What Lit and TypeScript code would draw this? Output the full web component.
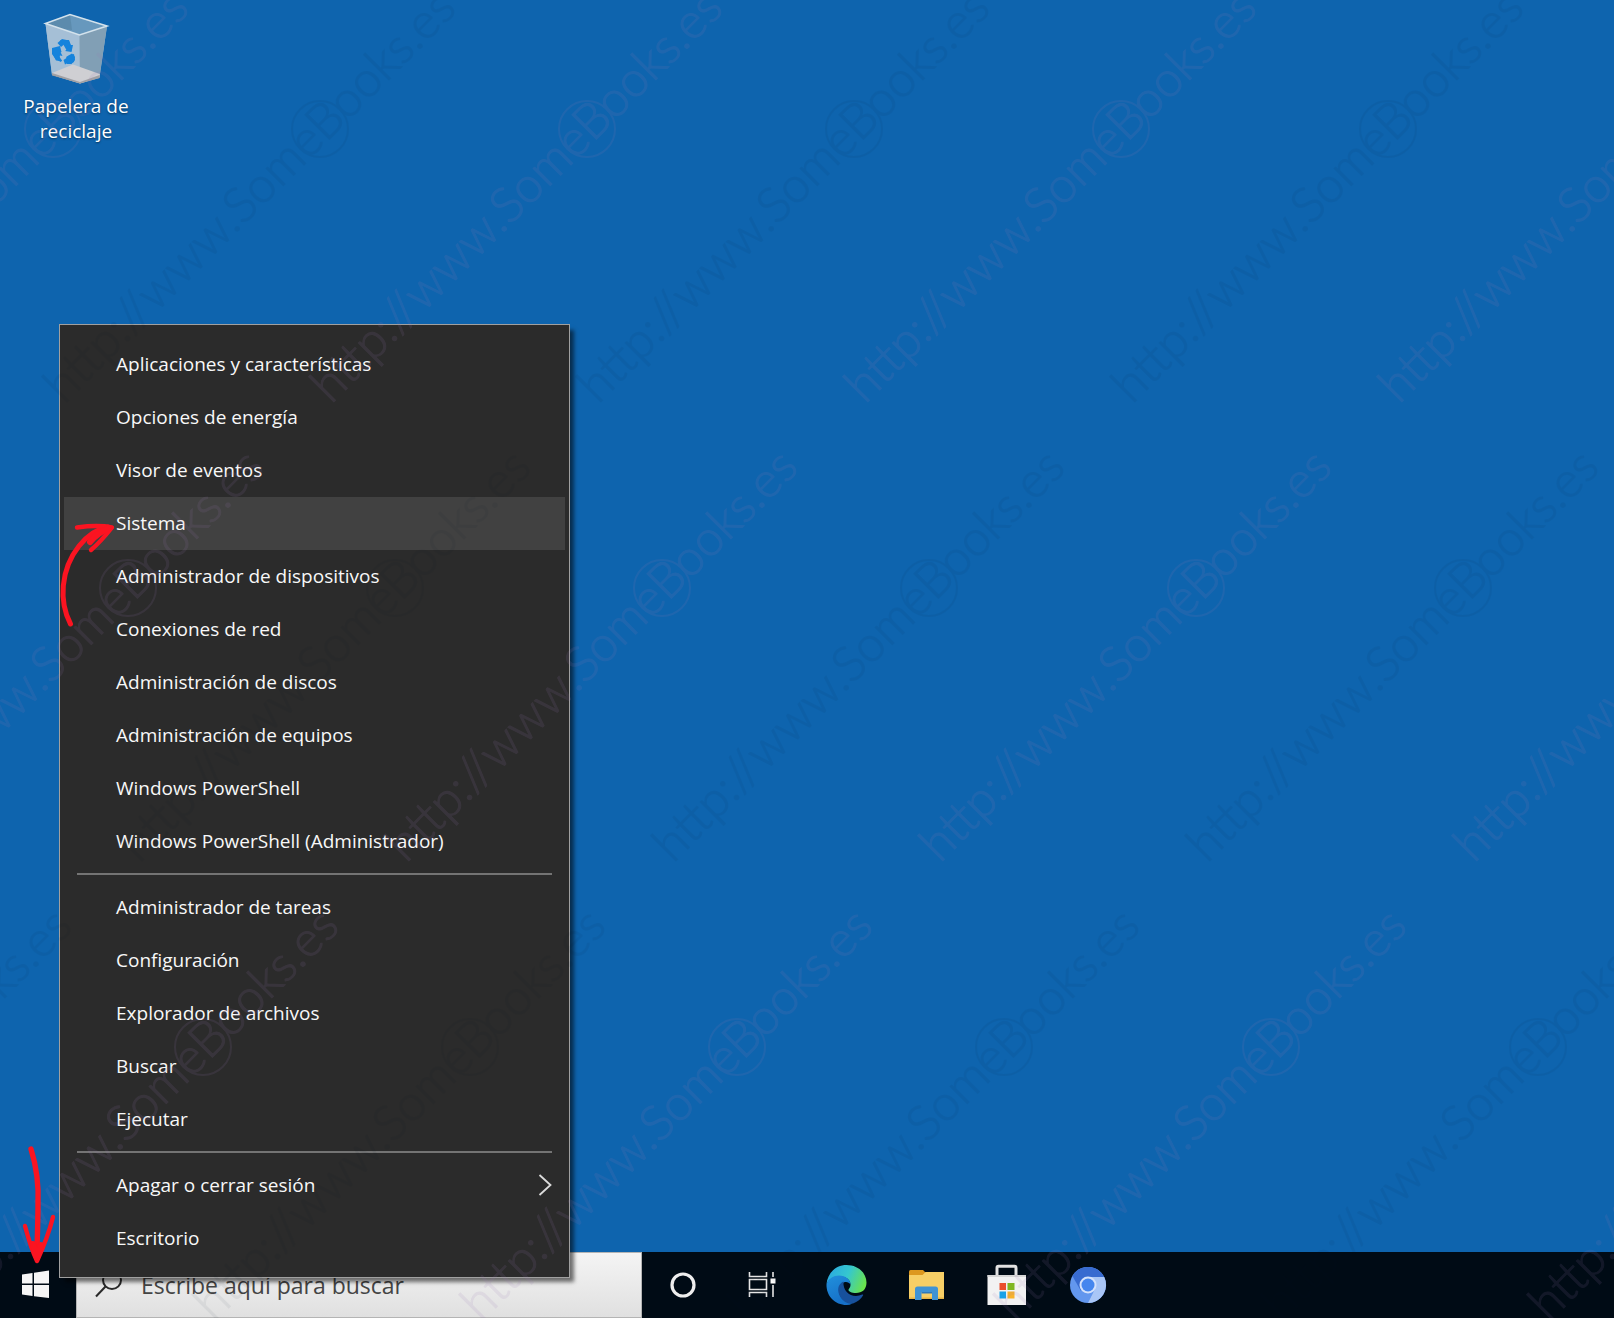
import { LitElement, html, svg, css, nothing } from "lit";
import { customElement, state } from "lit/decorators.js";

const MENU: string[][] = [
  [
    "Aplicaciones y características",
    "Opciones de energía",
    "Visor de eventos",
    "Sistema",
    "Administrador de dispositivos",
    "Conexiones de red",
    "Administración de discos",
    "Administración de equipos",
    "Windows PowerShell",
    "Windows PowerShell (Administrador)",
  ],
  ["Administrador de tareas", "Configuración", "Explorador de archivos", "Buscar", "Ejecutar"],
  ["Apagar o cerrar sesión", "Escritorio"],
];

const SUBMENU = "Apagar o cerrar sesión";

/* Centres of the repeated site mark: rows step 75 right and 459 down. */
const MARKS = [0, 1, 2]
  .flatMap((row) =>
    [-1, 0, 1, 2, 3, 4, 5, 6].map((col) => ({
      x: 53 + row * 75 + col * 267,
      y: 129 + row * 459,
      dark: Math.abs(col % 2) === 1,
    })),
  )
  .filter((mark) => mark.x > -130);

@customElement("win-menu")
export class WinMenu extends LitElement {
  @state() private active = "Sistema";

  static styles = css`
    :host {
      display: block;
      box-sizing: border-box;
      padding: 13px 4px 12px;
      color: #f8f8f8;
      background: #2b2b2b;
      border: 1px solid #a0a0a0;
      box-shadow: 5px 5px 4px -1px rgba(0, 0, 0, 0.55);
    }
    ul {
      margin: 0;
      padding: 0;
      list-style: none;
    }
    .item {
      display: flex;
      align-items: center;
      justify-content: space-between;
      width: 100%;
      height: 53px;
      padding: 0 12px 2px 52px;
      border: 0;
      background: none;
      color: inherit;
      font: inherit;
      text-align: left;
    }
    .active {
      background: #414141;
    }
    .rule {
      height: 2px;
      margin: 5px 13px 6px;
      background: #747474;
    }
  `;

  render() {
    return html`<ul role="menu">
      ${MENU.map(
        (group, i) => html`
          ${i ? html`<li class="rule" role="separator"></li>` : nothing}
          ${group.map(
            (label) => html`<li role="none">
              <button
                class="item ${label === this.active ? "active" : ""}"
                role="menuitem"
                @mouseenter=${() => (this.active = label)}
              >
                ${label}
                ${label === SUBMENU
                  ? html`<svg width="15" height="24" viewBox="0 0 15 24" fill="none">
                      <path d="M1.500 2 12.500 12 1.500 22" stroke="#dcdcdc" stroke-width="1.800" />
                    </svg>`
                  : nothing}
              </button>
            </li>`,
          )}
        `,
      )}
    </ul>`;
  }
}

@customElement("task-bar")
export class TaskBar extends LitElement {
  static styles = css`
    :host {
      display: flex;
      height: 66px;
      background: #000b15;
    }
    button {
      display: flex;
      align-items: center;
      justify-content: center;
      width: 81px;
      padding: 0;
      border: 0;
      background: none;
    }
    .start {
      width: 76px;
    }
    .search {
      display: flex;
      align-items: center;
      box-sizing: border-box;
      width: 566px;
      padding-left: 18px;
      gap: 18px;
      border: 1px solid #b4b4b4;
      background: linear-gradient(#f4f4f4, #e0e0e0);
    }
    input {
      flex: 1;
      min-width: 0;
      padding: 0;
      border: 0;
      outline: 0;
      background: none;
      font: inherit;
      font-size: 23px;
      color: #333;
    }
    input::placeholder {
      color: #444;
      opacity: 1;
    }
  `;

  render() {
    return html`
      <button class="start" aria-label="Inicio">
        <svg width="76" height="66" viewBox="0 0 76 66" fill="#f6f6f6">
          <path d="M22 22.500 32.500 21V31.500H22zM34 20.700 49 18.500V31.500H34zM22 33H32.500V44L22 42.500zM34 33H49V46L34 44.200z" />
        </svg>
      </button>
      <label class="search">
        <svg width="28" height="30" viewBox="0 0 28 30" fill="none" stroke="#2a2a2a" stroke-width="2">
          <circle cx="17" cy="10" r="9" />
          <path d="M10.500 16.500 1 26.500" />
        </svg>
        <input type="search" placeholder="Escribe aquí para buscar" aria-label="Buscar" />
      </label>
      <button aria-label="Cortana">
        <svg width="40" height="40" viewBox="0 0 40 40">
          <circle cx="20" cy="20" r="11" fill="none" stroke="#eee" stroke-width="3.200" />
        </svg>
      </button>
      <button aria-label="Vista de tareas">
        <svg width="40" height="40" viewBox="0 0 40 40" fill="none" stroke="#e6e6e6" stroke-width="1.600">
          <path d="M5.500 7V11.500H22.500V7M5.500 32V27.500H22.500V32M5.500 14.500H22.500V24.500H5.500zM29 7V12M29 20V32" />
          <path d="M26.500 13.500H31.500V18.500H26.500z" fill="#fff" stroke="none" />
        </svg>
      </button>
      <button aria-label="Microsoft Edge">
        <svg width="44" height="44" viewBox="0 0 44 44">
          <defs>
            <linearGradient id="top" x1="0" y1="0.300" x2="1" y2="0.600">
              <stop offset="0" stop-color="#2aa9e0" />
              <stop offset="0.500" stop-color="#35c7cf" />
              <stop offset="1" stop-color="#6be34a" />
            </linearGradient>
            <linearGradient id="left" x1="0" y1="0" x2="0.400" y2="1">
              <stop offset="0" stop-color="#2190dc" />
              <stop offset="1" stop-color="#1670c8" />
            </linearGradient>
          </defs>
          <path d="M3.500 21C4.500 10 13 2 23.500 2 35 2 43.500 10 43.500 19.500 43.500 26.500 39 30 33 30 28.500 30 25.500 28.500 25.500 27 25.500 25.800 27.500 25 27.500 21.500 27.500 17 23 13.500 17 13.500 10 13.500 5 17 3.500 21z" fill="url(#top)" />
          <path d="M3.500 21C5.500 15.500 10.500 12.500 16 12.500 22.500 12.500 27.500 16.500 27.500 21.500 25 17 17 18.500 16 26 15.500 33 21 40 29.500 40.500 27.500 41.500 25.500 42 23.500 42 12 42 3 33 3.500 21z" fill="url(#left)" />
          <path d="M20.500 18.500C16 20.500 14.500 25 15.500 29.500 17 36 23 41.500 30 40.500 34.500 39 38 36 40 32.500 40.500 31.700 39.800 31.300 39.200 31.600 30 36 19.500 30 20.500 18.500z" fill="#17519c" />
        </svg>
      </button>
      <button aria-label="Explorador de archivos">
        <svg width="40" height="40" viewBox="0 0 40 40">
          <path d="M3 6.500Q3 5 4.500 5H17L19.500 7.500V12H3z" fill="#dd981f" />
          <path d="M3 10H16.500L19.500 7H38V34H3z" fill="#f7cf66" />
          <path d="M3 32.500H38V34H3z" fill="#e5b345" />
          <path d="M9 35V24Q9 21.500 11.500 21.500H29.500Q32 21.500 32 24V35H26V27H15.500V35z" fill="#3f93d4" />
          <path d="M15.500 27H26V28.500H15.500z" fill="#2f78b8" />
        </svg>
      </button>
      <button aria-label="Microsoft Store">
        <svg width="44" height="44" viewBox="0 0 44 44">
          <path d="M12 14V5Q12 3.200 13.500 3.200H29.500Q31 3.200 31 5V14" fill="none" stroke="#e2e2e2" stroke-width="3" />
          <path d="M2.500 12H41V42H2.500z" fill="#f2f2f2" />
          <path d="M2.500 12H41V14H2.500z" fill="#d6d6d6" />
          <path d="M14.500 20H21V27H14.500z" fill="#ea4f2c" />
          <path d="M22.500 20H29.500V27H22.500z" fill="#80b722" />
          <path d="M14.500 28.500H21V35.500H14.500z" fill="#1ba1e8" />
          <path d="M22.500 28.500H29.500V35.500H22.500z" fill="#f8b32a" />
        </svg>
      </button>
      <button aria-label="Chromium">
        <svg width="40" height="40" viewBox="0 0 40 40">
          <circle cx="20" cy="20" r="18" fill="#6397ee" />
          <path d="M20 20 4.400 11A18 18 0 0 1 35.600 11L36.500 13H20z" fill="#386bd0" />
          <path d="M20 12H36.200A18 18 0 0 1 20 38L27 24z" fill="#a9c6f6" />
          <path d="M4.400 11 13 26 20 12z" fill="#386bd0" />
          <circle cx="20" cy="20" r="8.500" fill="#d4e2fb" />
          <circle cx="20" cy="20" r="6.500" fill="#4586ee" />
        </svg>
      </button>
    `;
  }
}

@customElement("app-root")
export class AppRoot extends LitElement {
  static styles = css`
    :host {
      position: relative;
      display: flex;
      flex-direction: column;
      min-height: 100vh;
      overflow: hidden;
      background: #0e64ae;
      color: #fff;
      font-family: "Open Sans", "Noto Sans", sans-serif;
      font-size: 19px;
    }
    .desktop {
      flex: 1;
      padding: 10px 16px;
    }
    .shortcut {
      display: flex;
      flex-direction: column;
      align-items: center;
      width: 120px;
      gap: 8px;
      color: inherit;
      line-height: 25px;
      text-align: center;
      text-decoration: none;
      text-shadow: 0 1px 2px rgba(0, 0, 0, 0.5);
    }
    .popup {
      position: absolute;
      left: 59px;
      bottom: 40px;
      width: 511px;
    }
    .marks,
    .arrows {
      position: absolute;
      left: 0;
      pointer-events: none;
    }
    .marks {
      top: 0;
      width: 100%;
      height: 100%;
      font-family: Lato, sans-serif;
      font-size: 49px;
      font-weight: 300;
    }
    .mark {
      fill: #9a78b4;
      stroke: #9a78b4;
      stroke-width: 1px;
      opacity: 0.12;
    }
    .mark circle {
      fill: none;
      stroke-width: 2px;
    }
    .mark.dark {
      fill: #00142a;
      stroke: #00142a;
      opacity: 0.05;
    }
    .arrows {
      bottom: 0;
    }
  `;

  render() {
    return html`
      <main class="desktop">
        <a class="shortcut" href="#papelera">
          <svg width="68" height="76" viewBox="0 0 68 76">
            <path d="M3.500 13.500 28 4.500 65 16 57.500 67 38 73.500 10 65z" fill="#9db8cf" />
            <path d="M3.500 13.500 28 4.500 65 16 37.500 25z" fill="#6798bd" />
            <path d="M3.500 13.500 28 4.500 30 20 20 19z" fill="#5c8bad" />
            <path d="M3.500 13.500 37.500 25 38 73 10 65z" fill="#a5bfd6" />
            <path d="M37.500 25 65 16 57.500 67 38 73z" fill="#819fb5" />
            <path d="M10 63 31 54.500 57.800 64 57.500 68 38 73.500 10 65z" fill="#cfcfd3" />
            <path d="M38 72 57.600 65 57.500 68 38 73.500 10 65.500V63z" fill="#8b8b90" opacity="0.7" />
            <path d="M3.500 13.500 28 4.500 65 16 37.500 25z" fill="none" stroke="#d3e2ec" stroke-width="1.600" />
            <path d="M15.500 33 20 29 27 30.500 29 35 31 35 29.500 42 23 41 25.500 39 22 34.500 19 37zM10 41 17.500 40 20.500 46 18 45.500 17 49 20 50 19 52 14 49.500 10 44zM24 47 30 43.500 33 47 32 52 28 54 27.500 52 23 54.500 21.500 50 24.500 48z" fill="#1583dc" />
            <path d="M10 38 18 36 19.500 42 16 44 20 51 14 50.500 10 43zM26 46 32 44 33 50 29.500 54 25 54 24 50zM18 30H27L29.500 41 25 41 21 34z" fill="#1583dc" />
          </svg>
          <span>Papelera de reciclaje</span>
        </a>
      </main>
      <task-bar></task-bar>
      <win-menu class="popup"></win-menu>
      <svg class="marks">
        ${MARKS.map(
          (m) => svg`<g class="mark ${m.dark ? "dark" : ""}" transform="translate(${m.x} ${m.y}) rotate(-45)">
            <circle r="28" />
            <text x="-376" y="14">http://www.SomeBooks.es</text>
          </g>`,
        )}
      </svg>
      <svg class="arrows" width="140" height="840" viewBox="0 478 140 840" fill="none" stroke="#fb1421" stroke-linecap="round" stroke-linejoin="round" aria-hidden="true">
        <path d="M70.500 624C59 602 60 570 79 546 87 536 97 529 108 527" stroke-width="5" />
        <path d="M77 527.500C88 526 100 525 112 527.500 106 535 98 544 91 550" stroke-width="4.400" />
        <path d="M109 528C102 531 95 536 90 542" stroke-width="6" />
        <path d="M31 1149C36 1165 39 1183 38 1205 38 1225 37 1240 37 1258" stroke-width="5.400" />
        <path d="M25 1226C29 1241 33 1253 37 1261 43 1248 49 1233 53 1217" stroke-width="4.400" />
        <path d="M33 1244 37 1258 41 1245" stroke-width="6" />
      </svg>
    `;
  }
}
